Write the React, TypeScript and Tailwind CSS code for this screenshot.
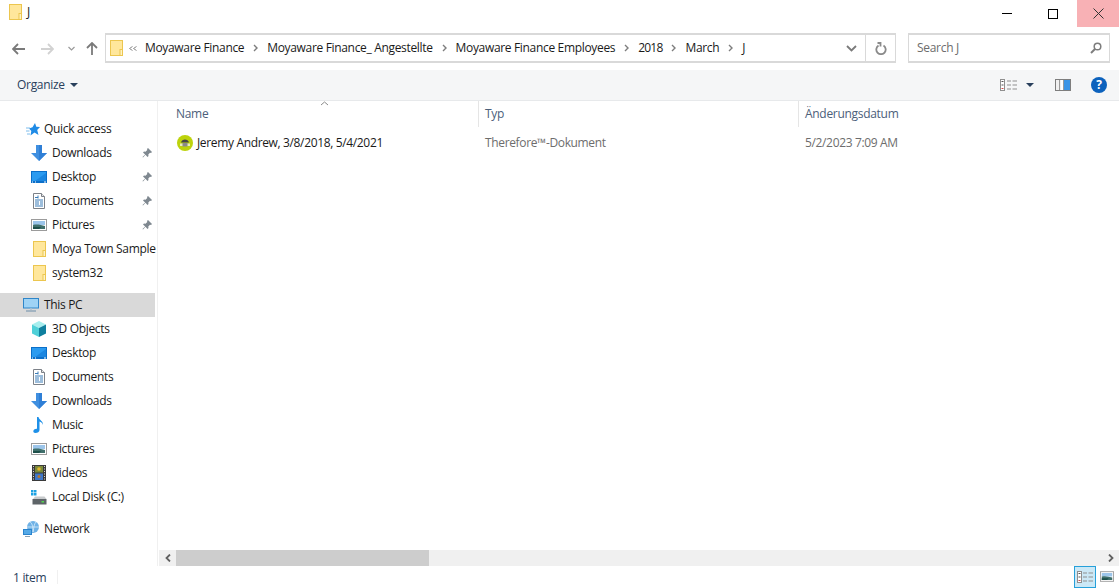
function FolderIcon() {
  return (
    <svg viewBox="0 0 13 16" className="h-4 w-[13px]">
      <rect x="0.5" y="0.5" width="12" height="15" fill="#ffe79c" stroke="#ecc64f" />
      <rect x="10" y="9.500" width="2.500" height="6" fill="#fff3c4" stroke="#ecc64f" />
    </svg>
  );
}

function DownloadIcon() {
  return (
    <svg viewBox="0 0 16 16" className="w-4 h-4">
      <path d="M5 0h6v8h5l-8 8-8-8h5z" fill="#3f8fe0" />
      <path d="M8 0h3v8h5l-8 8z" fill="#2f7fd6" />
    </svg>
  );
}

function DesktopIcon() {
  return (
    <svg viewBox="0 0 16 12" className="w-4 h-3">
      <rect width="16" height="12" fill="#0b6fc9" />
      <rect x="1" y="1" width="14" height="9" fill="#2b9bf0" />
      <path d="M4 10 15 2v8z" fill="#1b86e0" />
      <path d="M1 11h1M4 11h1M13 11h2" stroke="#fff" />
    </svg>
  );
}

function DocumentIcon() {
  return (
    <svg viewBox="0 0 12 16" className="w-3 h-4">
      <path d="M.5.5h8l3 3v12H.5z" fill="#fff" stroke="#7c8188" />
      <path d="M8.500.5v3h3" fill="#e6e6e6" stroke="#7c8188" />
      <path d="M2 4.500h3M5 2.500v3M2 7h8M2 9h4M7 9h3M2 11h4M7 11h3M2 13h8" stroke="#3b7db8" />
    </svg>
  );
}

function PictureIcon({ className = 'w-4 h-3' }: { className?: string }) {
  return (
    <svg viewBox="0 0 16 12" className={className}>
      <rect x="0.5" y="0.5" width="15" height="11" fill="#fff" stroke="#9b9b9b" />
      <rect x="2" y="2" width="12" height="4" fill="#9cc5ea" />
      <path d="M2 6c4-1 8 0 12 1v3H2z" fill="#3f6f6b" />
      <path d="M2 8h8l-2 2H2z" fill="#1d4f4a" />
    </svg>
  );
}

function PinIcon() {
  return (
    <svg viewBox="0 0 10 10" className="w-2.5 h-2.5">
      <path d="M6 0l4 4-1 1-1-.3L6.300 6.500 6.500 8 5.500 9 3.500 6.800 1 9.500.5 9l2.700-2.500L1 4.500l1-1 1.500.2L5.300 1.900 5 1z" fill="#7f8890" />
    </svg>
  );
}

function StarIcon() {
  return (
    <svg viewBox="0 0 14 13" className="ml-[3px] h-[13px] w-3.5 shrink-0">
      <path d="M9 0l1.300 3.800L14 4l-2.800 2.900L12.500 12 8.500 9.400 4.500 12.500l.8-4.500L3 5.500l3.500-1.300z" fill="#1f8be6" />
      <path d="M0 5h4M0 8h3.500M1 11h3" stroke="#7dbcec" />
    </svg>
  );
}

function MonitorIcon() {
  return (
    <svg viewBox="0 0 16 14" className="w-4 h-3.5">
      <rect x="0.500" y="0.500" width="15" height="9.500" fill="#9fd3f5" stroke="#2f86c9" />
      <path d="M7 10.500h2v1.500H7z" fill="#b9c7d2" />
      <path d="M3 13h10" stroke="#8fa6b8" strokeWidth="1.500" />
    </svg>
  );
}

function CubeIcon() {
  return (
    <svg viewBox="0 0 16 16" className="w-4 h-4">
      <path d="M8 0l7 3.500-7 3.500-7-3.500z" fill="#a7eeee" />
      <path d="M1 3.500l7 3.500v9l-7-3.500z" fill="#4fd0d8" />
      <path d="M15 3.500L8 7v9l7-3.500z" fill="#0f7f9e" />
    </svg>
  );
}

function MusicIcon() {
  return (
    <svg viewBox="0 0 12 16" className="w-3 h-4">
      <path d="M4 0h1.500c.5 3 5 4 4.500 8-.3-2-2-3-3.500-3.500V13c0 2-2 3-4 3S0 14.500.5 13.500 2.500 11.500 4 11.800z" fill="#1e90e8" />
    </svg>
  );
}

function VideoIcon() {
  return (
    <svg viewBox="0 0 14 16" className="w-3.5 h-4">
      <rect width="14" height="16" fill="#3a3a3a" />
      <rect x="3" y="1" width="8" height="6.500" fill="#7a8a3a" />
      <rect x="3" y="8.500" width="8" height="6.500" fill="#3f77c9" />
      <circle cx="7" cy="4" r="1.800" fill="#e3b62c" />
      <circle cx="7" cy="11.500" r="1.500" fill="#b9782c" />
      <path d="M1.500 1v14M12.500 1v14" stroke="#d8d8d8" strokeDasharray="1 1.500" />
    </svg>
  );
}

function DiskIcon() {
  return (
    <svg viewBox="0 0 16 15" className="h-[15px] w-4">
      <path d="M0 0h2.500v2.500H0zM3 0h2.500v2.500H3zM0 3h2.500v2.500H0zM3 3h2.500v2.500H3z" fill="#1ba1e2" />
      <path d="M2 9l2-2.500h9.500L15.500 9z" fill="#c7cacc" />
      <rect x="1.500" y="9" width="14" height="5.500" fill="#5e6468" />
      <rect x="10.500" y="11" width="2.500" height="1.500" fill="#52d64f" />
    </svg>
  );
}

function NetworkIcon() {
  return (
    <svg viewBox="0 0 16 16" className="w-4 h-4">
      <circle cx="10" cy="6" r="6" fill="#6fb2e6" />
      <path d="M7 1c2 1 3 4 3 10M13 1c-2 2-2 5-3 10M4 6h12" stroke="#d8ecfa" strokeWidth=".8" fill="none" />
      <rect x="0" y="8" width="9" height="6" fill="#2a84cd" />
      <rect x="1" y="9" width="7" height="4" fill="#55a9e6" />
      <path d="M2 15.500h5" stroke="#8aa0b2" />
    </svg>
  );
}

function FileIcon() {
  return (
    <svg viewBox="0 0 16 16" className="w-4 h-4 shrink-0">
      <circle cx="8" cy="8" r="8" fill="#bdd30c" />
      <path d="M4 7.500C4.800 3.500 11.200 3.500 12 7.500z" fill="#454545" />
      <rect x="3" y="8.500" width="10" height="2.500" fill="#e6edb8" />
      <rect x="5.500" y="8" width="5" height="3.500" fill="#8a8a8a" />
    </svg>
  );
}

function NavItem({ icon, label, pin, indent = true, active }: { icon: React.ReactNode; label: string; pin?: boolean; indent?: boolean; active?: boolean }) {
  return (
    <div className={`relative flex h-6 items-center w-[155px] ${indent ? 'pl-[31px]' : 'pl-[23px]'} ${active ? 'bg-[#d9d9d9]' : ''}`}>
      <div className="flex w-4 shrink-0 items-center justify-center">{icon}</div>
      <span className="ml-[5px] whitespace-nowrap text-[12px] tracking-[-0.33px] text-[#1a1a1a]">{label}</span>
      {pin && <div className="absolute left-[142px] top-[7px]"><PinIcon /></div>}
    </div>
  );
}

function Crumb({ label, tight }: { label: string; tight?: boolean }) {
  return <span className={`whitespace-nowrap text-[12px] text-[#1a1a1a] ${tight ? 'tracking-[-0.8px]' : 'tracking-[-0.33px]'}`}>{label}</span>;
}

function Sep() {
  return (
    <svg viewBox="0 0 5 8" className="mx-[9px] h-2 w-[5px] shrink-0">
      <path d="M1 1l3 3-3 3" stroke="#7d7d7d" strokeWidth="1.400" fill="none" />
    </svg>
  );
}

export default function App() {
  return (
    <div className="flex h-[588px] w-[1119px] flex-col overflow-hidden bg-white font-['Open_Sans',sans-serif]">
      {/* title bar */}
      <div className="flex h-[27px] shrink-0 items-start">
        <div className="ml-[9px] mt-[4px]"><FolderIcon /></div>
        <span className="ml-[5px] mt-[3px] text-[12px] text-[#1a1a1a]">J</span>
        <div className="ml-auto flex">
          <div className="flex h-[27px] w-[46px] items-center justify-center pr-[2px]">
            <div className="h-px w-[10px] bg-black" />
          </div>
          <div className="flex h-[27px] w-[46px] items-center justify-center pr-[2px]">
            <div className="h-[10px] w-[10px] border border-black" />
          </div>
          <div className="flex h-[27px] w-[42px] items-center justify-center bg-[#f8b1b5]">
            <svg viewBox="0 0 11 11" className="h-[11px] w-[11px]"><path d="M.5.5l10 10M10.500.5l-10 10" stroke="#333" /></svg>
          </div>
        </div>
      </div>

      {/* nav bar */}
      <div className="flex h-[43px] shrink-0 items-start pt-[6px]">
        <div className="flex h-[31px] w-[105px] shrink-0 items-center">
          <svg viewBox="0 0 13 12" className="ml-[12px] h-3 w-[13px]"><path d="M6 1L1 6l5 5M1 6h12" stroke="#7a7a7a" strokeWidth="1.800" fill="none" /></svg>
          <svg viewBox="0 0 13 12" className="ml-[16px] h-3 w-[13px]"><path d="M7 1l5 5-5 5M12 6H0" stroke="#d2d2d2" strokeWidth="1.800" fill="none" /></svg>
          <svg viewBox="0 0 7 5" className="ml-[14px] h-[5px] w-[7px]"><path d="M.5 1l3 3 3-3" stroke="#9a9a9a" strokeWidth="1.200" fill="none" /></svg>
          <svg viewBox="0 0 12 13" className="ml-[11px] h-[13px] w-3"><path d="M1 6l5-5 5 5M6 1v12" stroke="#7a7a7a" strokeWidth="1.800" fill="none" /></svg>
        </div>
        <div className="flex h-[30px] w-[791px] shrink-0 items-center border-2 border-[#d9d9d9] border-x-[1.5px]">
          <div className="ml-[4px] flex"><FolderIcon /></div>
          <svg viewBox="0 0 8 5" className="ml-[6px] h-[5px] w-2"><path d="M3.500.5l-3 2 3 2M7.500.5l-3 2 3 2" stroke="#8a8a8a" fill="none" /></svg>
          <div className="ml-[8px] flex items-center">
            <Crumb label="Moyaware Finance" />
            <Sep />
            <Crumb label="Moyaware Finance_ Angestellte" />
            <Sep />
            <Crumb label="Moyaware Finance Employees" />
            <Sep />
            <Crumb tight label="2018" />
            <Sep />
            <Crumb label="March" />
            <Sep />
            <Crumb label="J" />
          </div>
          <div className="ml-auto flex h-full items-center">
            <svg viewBox="0 0 11 7" className="mr-[8px] h-[7px] w-[11px]"><path d="M1 1l4.500 4.500L10 1" stroke="#7a7a7a" strokeWidth="1.800" fill="none" /></svg>
            <div className="flex h-full w-[30px] items-center justify-center border-l border-[#d9d9d9]">
              <svg viewBox="0 0 12 13" className="h-[13px] w-3"><path d="M3.500 3.500a4.700 4.700 0 1 0 5 0M2.500 1h3v3.500" stroke="#8a8a8a" strokeWidth="1.800" fill="none" /></svg>
            </div>
          </div>
        </div>
        <div className="ml-[12px] flex h-[30px] w-[202px] shrink-0 items-center justify-between border-2 border-[#d9d9d9] border-x-[1.5px] pl-[8px] pr-[7px]">
          <span className="text-[12px] tracking-[-0.3px] text-[#6d6d6d]">Search J</span>
          <svg viewBox="0 0 12 12" className="h-3 w-3"><circle cx="7.500" cy="4.500" r="3.300" stroke="#7d7d7d" strokeWidth="1.500" fill="none" /><path d="M5 7l-4 4" stroke="#7d7d7d" strokeWidth="2" /></svg>
        </div>
      </div>

      {/* toolbar */}
      <div className="flex h-[31px] shrink-0 items-center border-b border-[#e7e9eb] bg-[#f5f6f7]">
        <span className="ml-[17px] text-[12px] tracking-[-0.3px] text-[#29405c]">Organize</span>
        <svg viewBox="0 0 8 4" className="ml-[5px] h-1 w-2"><path d="M0 0h8L4 4z" fill="#29405c" /></svg>
        <div className="ml-auto flex items-center">
          <svg viewBox="0 0 17 12" className="h-3 w-[17px]">
            <rect x=".5" y=".5" width="4" height="11" fill="#fff" stroke="#8f8f8f" />
            <path d="M1.500 2.500h2M1.500 6h2" stroke="#555" />
            <path d="M1.500 9.500h2" stroke="#d04a4a" />
            <path d="M7 2h4M12.500 2H17M7 6h4M12.500 6H17M7 10h4M12.500 10H17" stroke="#8f8f8f" />
          </svg>
          <svg viewBox="0 0 8 4" className="ml-[9px] h-1 w-2"><path d="M0 0h8L4 4z" fill="#29405c" /></svg>
          <svg viewBox="0 0 16 12" className="ml-[21px] h-3 w-4">
            <rect x=".5" y=".5" width="15" height="11" fill="#fff" stroke="#7e7e7e" />
            <rect x="1" y="1" width="5" height="10" fill="#f0f0f0" />
            <rect x="9" y="1" width="6" height="10" fill="#3d95e6" />
            <path d="M4.500 1v10M8.500 1v10" stroke="#9a9a9a" />
          </svg>
          <div className="ml-[20px] mr-[12px] flex h-4 w-4 items-center justify-center rounded-full bg-[#0c62bd] text-[12px] font-bold leading-none text-white">?</div>
        </div>
      </div>

      {/* body */}
      <div className="flex min-h-0 flex-1">
        <aside className="w-[158px] shrink-0 border-r border-[#f0f0f0] pt-4">
          <NavItem indent={false} icon={<StarIcon />} label="Quick access" />
          <NavItem icon={<DownloadIcon />} label="Downloads" pin />
          <NavItem icon={<DesktopIcon />} label="Desktop" pin />
          <NavItem icon={<DocumentIcon />} label="Documents" pin />
          <NavItem icon={<PictureIcon />} label="Pictures" pin />
          <NavItem icon={<FolderIcon />} label="Moya Town Sample" />
          <NavItem icon={<FolderIcon />} label="system32" />
          <div className="h-2" />
          <NavItem indent={false} active icon={<MonitorIcon />} label="This PC" />
          <NavItem icon={<CubeIcon />} label="3D Objects" />
          <NavItem icon={<DesktopIcon />} label="Desktop" />
          <NavItem icon={<DocumentIcon />} label="Documents" />
          <NavItem icon={<DownloadIcon />} label="Downloads" />
          <NavItem icon={<MusicIcon />} label="Music" />
          <NavItem icon={<PictureIcon />} label="Pictures" />
          <NavItem icon={<VideoIcon />} label="Videos" />
          <NavItem icon={<DiskIcon />} label="Local Disk (C:)" />
          <div className="h-2" />
          <NavItem indent={false} icon={<NetworkIcon />} label="Network" />
        </aside>

        <main className="flex min-w-0 flex-1 flex-col">
          <div className="relative flex h-[26px] shrink-0 text-[12px] tracking-[-0.3px] text-[#4c607a]">
            <div className="flex h-full w-[321px] items-center border-r border-[#e5e5e5] pl-[18px]">Name</div>
            <div className="flex h-full w-[320px] items-center border-r border-[#e5e5e5] pl-[6px]">Typ</div>
            <div className="flex h-full items-center pl-[6px]">Änderungsdatum</div>
            <svg viewBox="0 0 9 5" className="absolute left-[162px] top-0 h-[5px] w-[9px]"><path d="M1 4l3.500-3L8 4" stroke="#8a8a8a" fill="none" /></svg>
          </div>
          <div className="mt-1 flex h-6 shrink-0 items-center text-[12px] tracking-[-0.35px]">
            <div className="flex w-[320px] items-center pl-[19px]">
              <FileIcon />
              <span className="ml-[4px] whitespace-nowrap text-[#1a1a1a]">Jeremy Andrew, 3/8/2018, 5/4/2021</span>
            </div>
            <div className="w-[320px] pl-[7px] text-[#6d6d6d]">Therefore™-Dokument</div>
            <div className="pl-[7px] text-[#6d6d6d]">5/2/2023 7:09 AM</div>
          </div>
          <div className="flex-1" />
          <div className="ml-px flex h-4 shrink-0 items-center bg-[#f0f0f0]">
            <div className="flex h-full w-[17px] items-center justify-center">
              <svg viewBox="0 0 6 8" className="h-2 w-[6px]"><path d="M5 .5L1.500 4 5 7.500" stroke="#606060" strokeWidth="1.800" fill="none" /></svg>
            </div>
            <div className="h-full w-[253px] bg-[#cdcdcd]" />
            <div className="ml-auto flex h-full w-[17px] items-center justify-center">
              <svg viewBox="0 0 6 8" className="h-2 w-[6px]"><path d="M1 .5L4.500 4 1 7.500" stroke="#606060" strokeWidth="1.800" fill="none" /></svg>
            </div>
          </div>
        </main>
      </div>

      {/* status bar */}
      <div className="flex h-[22px] shrink-0 items-center">
        <span className="ml-[13px] pt-[2px] text-[12px] tracking-[-0.3px] text-[#29405c]">1 item</span>
        <div className="ml-[11px] h-[14px] w-px bg-[#f0f0f0]" />
        <div className="ml-auto flex h-full items-start">
          <div className="flex h-full w-[22px] items-center justify-center border border-[#26a0da] bg-[#cbe8f6]">
            <svg viewBox="0 0 16 12" className="h-3 w-4">
              <rect x=".5" y=".5" width="4" height="11" fill="#fff" stroke="#8f8f8f" />
              <path d="M1.500 2.500h2M1.500 6h2" stroke="#555" />
              <path d="M1.500 9.500h2" stroke="#d04a4a" />
              <path d="M6 2h4M11.500 2H16M6 6h4M11.500 6H16M6 10h4M11.500 10H16" stroke="#8f8f8f" />
            </svg>
          </div>
          <div className="ml-[4px] mr-[5px] mt-[5px] flex"><PictureIcon className="h-[11px] w-[14px]" /></div>
        </div>
      </div>
    </div>
  );
}
